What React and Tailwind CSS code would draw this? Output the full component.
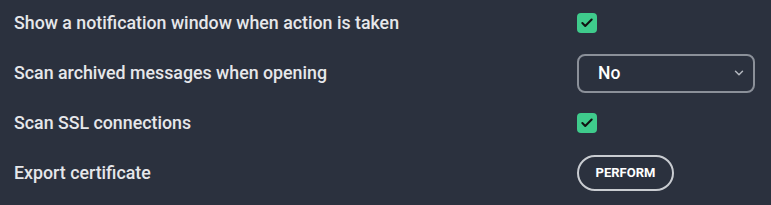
import { Check, ChevronDown } from 'lucide-react'

const rows = [
  { label: 'Show a notification window when action is taken', type: 'check' },
  { label: 'Scan archived messages when opening', type: 'select', value: 'No' },
  { label: 'Scan SSL connections', type: 'check' },
  { label: 'Export certificate', type: 'button', value: 'PERFORM' },
]

function Control({ row }) {
  if (row.type === 'check') {
    return (
      <div className="w-5 h-5 rounded-[4px] bg-[#3fcb8c] flex items-center justify-center">
        <Check className="w-[14px] h-[14px] text-[#111]" strokeWidth={3.5} />
      </div>
    )
  }
  if (row.type === 'select') {
    return (
      <div className="w-[178px] h-[39px] rounded-[8px] border-2 border-[#8b9099] flex items-center justify-between pl-[19px] pr-[7px]">
        <span className="text-[17.5px] font-medium text-white">{row.value}</span>
        <ChevronDown className="w-[14px] h-[14px] text-[#b4b8bf]" strokeWidth={2.5} />
      </div>
    )
  }
  return (
    <button className="w-[97px] h-[36px] rounded-full border-2 border-[#c9ccd1] text-[13px] font-bold text-white">
      {row.value}
    </button>
  )
}

export default function App() {
  return (
    <div className="w-[771px] h-[205px] bg-[#2b313e] overflow-hidden" style={{ fontFamily: 'Roboto, "Liberation Sans", sans-serif' }}>
      <div className="flex flex-col -mt-[2px]">
        {rows.map((row) => (
          <div key={row.label} className="h-[50px] flex items-center">
            <div className="w-[563px] ml-[14px] text-[17.8px] font-medium text-[#e6e7ea]">{row.label}</div>
            <Control row={row} />
          </div>
        ))}
      </div>
    </div>
  )
}
